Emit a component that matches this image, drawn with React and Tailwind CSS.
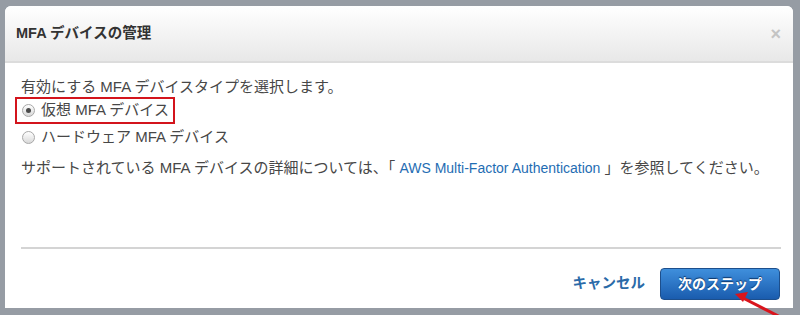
const font = { fontFamily: '"Liberation Sans", "Noto Sans CJK JP", sans-serif' };

function Radio({ checked }) {
  return (
    <span className="w-[13px] h-[13px] rounded-full border border-[#a8a8a8] bg-gradient-to-b from-white to-[#d9d9d9] flex items-center justify-center shrink-0">
      {checked && <span className="w-[5px] h-[5px] rounded-full bg-[#4a4a4a]" />}
    </span>
  );
}

export default function App() {
  return (
    <div className="relative w-[800px] h-[315px] overflow-hidden bg-[#969ca4] pt-[6px] pl-[5px] pr-[7px]" style={font}>
      <div className="bg-white rounded-t-[6px] h-[302px] flex flex-col">
        {/* header */}
        <div className="h-[57px] flex items-center justify-between pl-[11px] pr-[12px] rounded-t-[6px] bg-gradient-to-b from-white to-[#e8e8e8] border-b-2 border-[#dcdcdc]">
          <h1 className="text-[14.5px] font-bold text-[#333]">MFA デバイスの管理</h1>
          <span className="text-[18px] font-bold text-[#c4c4c4] leading-none">×</span>
        </div>

        {/* body */}
        <div className="h-[184px] px-[16px] pt-[14px] text-[15px] text-[#474747]">
          <p className="leading-[20px]">有効にする MFA デバイスタイプを選択します。</p>
          <label className="-ml-[6px] w-[160px] h-[27px] border-2 border-[#d3141c] flex items-center gap-[6px] pl-[5px]">
            <Radio checked />
            <span>仮想 MFA デバイス</span>
          </label>
          <label className="h-[27px] flex items-center gap-[6px] pl-[1px]">
            <Radio />
            <span>ハードウェア MFA デバイス</span>
          </label>
          <p className="mt-[7px] leading-[20px]">
            サポートされている MFA デバイスの詳細については、「 <a className="text-[14px] text-[#1f6db3]">AWS Multi-Factor Authentication</a> 」を参照してください。
          </p>
        </div>

        {/* footer */}
        <div className="mx-[16px] mr-[12px] border-t-2 border-[#d4d4d4]" />
        <div className="flex items-center justify-end gap-[15px] pr-[13px] pt-[19px]">
          <button className="text-[14.5px] font-bold text-[#2a6aa8]">キャンセル</button>
          <button className="w-[120px] h-[32px] rounded-[4px] border border-[#1d4f8c] bg-gradient-to-b from-[#3f8fdc] to-[#1a5cae] text-white text-[14px] font-bold [text-shadow:0_-1px_1px_#0b3466]">
            次のステップ
          </button>
        </div>
      </div>

      {/* annotation arrow */}
      <svg className="absolute left-0 top-0 pointer-events-none" width="800" height="315">
        <line x1="741" y1="297" x2="790" y2="322" stroke="#d9141c" strokeWidth="3" />
        <polygon points="735,294 748,292 743,302" fill="#d9141c" />
      </svg>
    </div>
  );
}
